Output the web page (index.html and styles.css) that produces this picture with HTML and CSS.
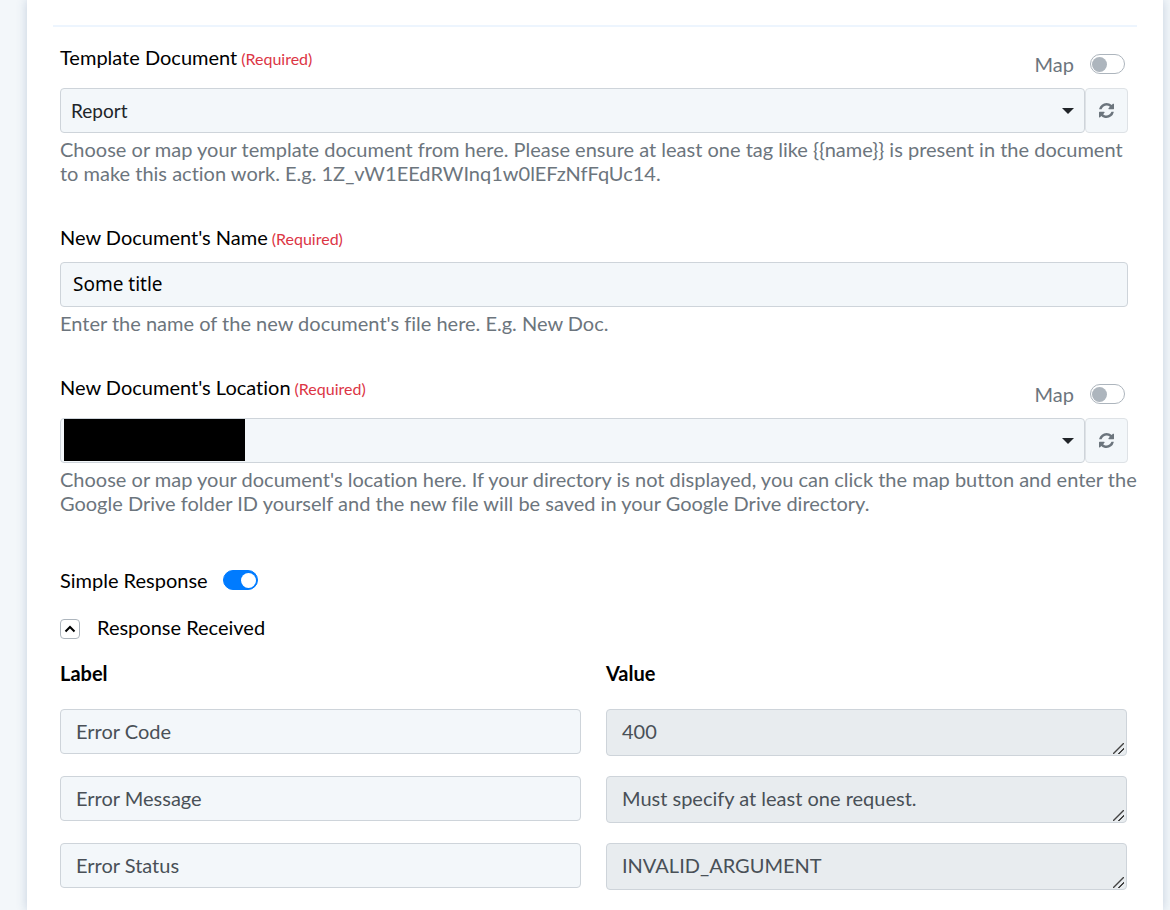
FILE: index.html
```html
<!DOCTYPE html>
<html lang="en">
<head>
    <meta charset="UTF-8">
    <meta name="viewport" content="width=device-width, initial-scale=1.0">
    <title>Create Document</title>
    <link rel="stylesheet" href="styles.css">
</head>
<body>
    <svg width="0" height="0" class="sprite">
        <symbol id="refresh" viewBox="0 0 1536 1536"><path d="M1511 928q0 5-1 7-64 268-268 434.500T764 1536q-146 0-282.500-55T238 1324l-129 129q-19 19-45 19t-45-19-19-45V960q0-26 19-45t45-19h448q26 0 45 19t19 45-19 45l-137 137q71 66 161 102t187 36q134 0 250-65t186-179q11-17 53-117 8-23 30-23h192q13 0 22.500 9.500t9.500 22.500zm25-800v448q0 26-19 45t-45 19h-448q-26 0-45-19t-19-45 19-45l138-138Q969 256 768 256q-134 0-250 65T332 500q-11 17-53 117-8 23-30 23H50q-13 0-22.500-9.500T18 608v-7q65-268 270-434.500T768 0q146 0 284 55.500T1297 212l130-129q19-19 45-19t45 19 19 45z"/></symbol>
    </svg>
    <main class="card">
        <hr class="divider">
        <form class="form">
            <div class="field">
                <div class="field-head">
                    <label for="template">Template Document<span class="required">(Required)</span></label>
                    <label class="map">Map <input type="checkbox" class="switch"></label>
                </div>
                <div class="control-row">
                    <div class="select-box">
                        <select id="template" class="control">
                            <option>Report</option>
                        </select>
                    </div>
                    <button type="button" class="refresh" aria-label="Refresh">
                        <svg width="15" height="15"><use href="#refresh"/></svg>
                    </button>
                </div>
                <p class="help">Choose or map your template document from here. Please ensure at least one tag like {{name}} is present in the document to make this action work. E.g. 1Z_vW1EEdRWInq1w0lEFzNfFqUc14.</p>
            </div>

            <div class="field">
                <div class="field-head short">
                    <label for="docName">New Document's Name<span class="required">(Required)</span></label>
                </div>
                <input type="text" id="docName" class="control title-input" value="Some title">
                <p class="help">Enter the name of the new document's file here. E.g. New Doc.</p>
            </div>

            <div class="field">
                <div class="field-head">
                    <label for="location">New Document's Location<span class="required">(Required)</span></label>
                    <label class="map">Map <input type="checkbox" class="switch"></label>
                </div>
                <div class="control-row">
                    <div class="select-box">
                        <select id="location" class="control">
                            <option></option>
                        </select>
                        <span class="redacted"></span>
                    </div>
                    <button type="button" class="refresh" aria-label="Refresh">
                        <svg width="15" height="15"><use href="#refresh"/></svg>
                    </button>
                </div>
                <p class="help">Choose or map your document's location here. If your directory is not displayed, you can click the map button and enter the Google Drive folder ID yourself and the new file will be saved in your Google Drive directory.</p>
            </div>

            <div class="simple">
                <label for="simple">Simple Response</label>
                <input type="checkbox" id="simple" class="switch" checked>
            </div>

            <div class="response-head">
                <button type="button" class="collapse" aria-label="Collapse">
                    <svg viewBox="0 0 12 8" width="12" height="8"><path d="M1.500 6.500L6 2l4.500 4.500" fill="none" stroke="#000" stroke-width="2"/></svg>
                </button>
                <span>Response Received</span>
            </div>

            <div class="response">
                <div class="col-title" id="colLabel">Label</div>
                <div class="col-title" id="colValue">Value</div>
                <input type="text" class="control key" aria-labelledby="colLabel" value="Error Code">
                <textarea class="control value" aria-labelledby="colValue" rows="1" readonly>400</textarea>
                <input type="text" class="control key" aria-labelledby="colLabel" value="Error Message">
                <textarea class="control value" aria-labelledby="colValue" rows="1" readonly>Must specify at least one request.</textarea>
                <input type="text" class="control key" aria-labelledby="colLabel" value="Error Status">
                <textarea class="control value" aria-labelledby="colValue" rows="1" readonly>INVALID_ARGUMENT</textarea>
            </div>
        </form>
    </main>
</body>
</html>
```
FILE: styles.css
```css
* {
    box-sizing: border-box;
    margin: 0;
    padding: 0;
}

body {
    font-family: Lato, sans-serif;
    font-size: 20px;
    line-height: 24px;
    font-variant-ligatures: none;
    color: #000;
    background: #f3f7fa;
}

.sprite {
    display: none;
}

.card {
    min-height: 100vh;
    margin: 0 7px 0 27px;
    padding: 25px 26px 20px;
    background: #fff;
    box-shadow: 0 0 10px rgba(60, 90, 140, 0.25);
}

.divider {
    height: 2px;
    border: none;
    background: #edf5fe;
}

.form {
    padding: 18px 9px 0 7px;
}

.field {
    margin-bottom: 40px;
}

.field-head {
    display: flex;
    justify-content: space-between;
    height: 43px;
}

.field-head.short {
    height: 37px;
}

.required {
    margin-left: 4px;
    font-size: 16px;
    color: #dc3545;
}

.map {
    display: flex;
    align-items: center;
    gap: 16px;
    height: 24px;
    margin: 7px 3px 0 0;
    color: #6c757d;
}

.switch {
    appearance: none;
    display: flex;
    align-items: center;
    width: 35px;
    height: 20px;
    padding: 0 1px;
    border: 1px solid #adb5bd;
    border-radius: 10px;
    background: #fff;
}

.switch::before {
    content: "";
    width: 15px;
    height: 15px;
    border-radius: 50%;
    background: #adb5bd;
}

.switch:checked {
    justify-content: flex-end;
    border-color: #007bff;
    background: #007bff;
}

.switch:checked::before {
    background: #fff;
}

.control {
    display: block;
    width: 100%;
    height: 45px;
    border: 1px solid #ced4da;
    border-radius: 4px;
    background: #f3f7fa;
    font-family: inherit;
    font-size: 20px;
    line-height: 24px;
    font-variant-ligatures: none;
    outline: none;
}

.control-row {
    display: flex;
}

.select-box {
    position: relative;
    flex: 1;
}

.select-box select {
    appearance: none;
    padding: 0 10px;
    font-size: 19px;
    color: #212529;
}

.select-box::after {
    content: "";
    position: absolute;
    top: 20px;
    right: 11px;
    border: 6px solid transparent;
    border-top-color: #212529;
    border-bottom: none;
    pointer-events: none;
}

.redacted {
    position: absolute;
    top: 1px;
    left: 4px;
    width: 181px;
    height: 42px;
    background: #000;
}

.refresh {
    display: flex;
    align-items: center;
    justify-content: center;
    width: 43px;
    border: 1px solid #dee2e6;
    border-radius: 4px;
    background: #f3f7fa;
    fill: #6c757d;
    cursor: pointer;
}

.title-input {
    padding: 0 12px 2px;
    font-family: "Noto Sans", sans-serif;
    font-size: 19px;
}

.help {
    margin: 4px -14px 0 0;
    color: #6c757d;
}

.simple {
    display: flex;
    align-items: center;
    gap: 15px;
    margin-top: 53px;
}

.response-head {
    display: flex;
    align-items: flex-end;
    gap: 17px;
    margin-top: 23px;
}

.collapse {
    display: flex;
    align-items: center;
    justify-content: center;
    width: 20px;
    height: 20px;
    border: 1px solid #adb5bd;
    border-radius: 4px;
    background: #fff;
    cursor: pointer;
}

.response {
    display: grid;
    grid-template-columns: 1fr 1fr;
    gap: 20px 25px;
    margin-top: 22px;
    padding-right: 1px;
}

.col-title {
    margin-bottom: 4px;
    font-weight: 700;
}

.key,
.value {
    padding: 0 15px 2px;
    color: #495057;
}

.value {
    height: 47px;
    padding-top: 9px;
    background: #e8ecef;
    resize: vertical;
}

.value::-webkit-resizer {
    background: linear-gradient(135deg, transparent 44%, #444 47%, #444 53%, transparent 56%, transparent 69%, #444 72%, #444 78%, transparent 81%) no-repeat right 2px bottom 1px / 11px 11px;
}
```
